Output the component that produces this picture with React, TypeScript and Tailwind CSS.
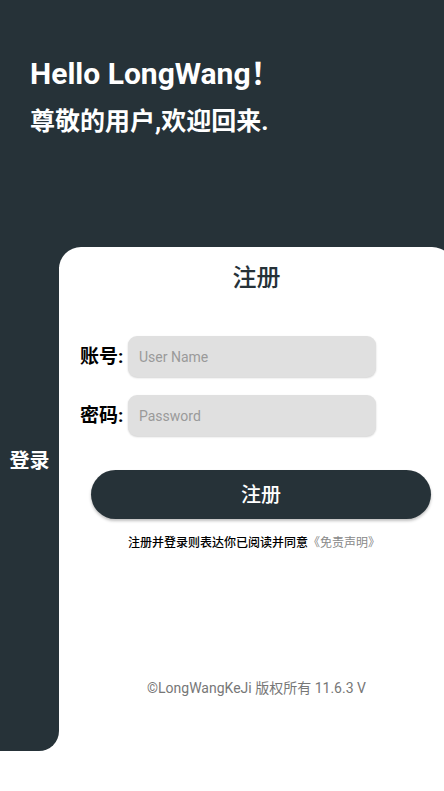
const sans = "font-['Roboto','Noto_Sans_CJK_SC',sans-serif]";

function Field({ label, placeholder, type }: { label: string; placeholder: string; type: string }) {
  return (
    <div className="flex items-center">
      <span className="w-[48px] text-[19px] font-bold text-black leading-none">{label}</span>
      <input
        type={type}
        placeholder={placeholder}
        className="h-[41px] w-[248px] rounded-[9px] bg-[#e0e0e0] px-[11px] text-[14px] text-gray-800 placeholder:text-[#9a9a9a] shadow-[0_1px_2px_rgba(0,0,0,0.18)] outline-none"
      />
    </div>
  );
}

export default function App() {
  return (
    <div className={`${sans} relative h-[791px] w-[444px] overflow-hidden bg-white`}>
      <div className="h-[267px] bg-[#263238] px-[30px] pt-[55px] text-white">
        <h1 className="text-[30px] font-bold leading-[38px]">Hello LongWang！</h1>
        <p className="mt-[12px] text-[25px] font-bold leading-[33px]">尊敬的用户,欢迎回来.</p>
      </div>

      <div className="-mt-[20px] flex">
        <div className="flex h-[504px] w-[59px] shrink-0 justify-center rounded-br-[20px] bg-[#263238] pt-[200px]">
          <span className="text-[20px] font-bold leading-[28px] text-white">登录</span>
        </div>

        <div className="relative w-[395px] shrink-0 rounded-t-[22px] bg-white pl-[21px]">
          <h2 className="-ml-[21px] pt-[14px] text-center text-[24px] font-medium leading-[34px] text-[#263238]">注册</h2>

          <div className="mt-[41px] flex flex-col gap-[18px]">
            <Field label="账号:" placeholder="User Name" type="text" />
            <Field label="密码:" placeholder="Password" type="password" />
          </div>

          <button className="mt-[34px] ml-[11px] flex h-[49px] w-[340px] items-center justify-center rounded-full bg-[#263238] text-[20px] font-medium text-white shadow-[0_2px_3px_rgba(0,0,0,0.25)]">
            注册
          </button>

          <p className="mt-[15px] -ml-[21px] pr-[5px] text-center text-[12px] font-medium leading-[18px] text-black">
            注册并登录则表达你已阅读并同意<span className="font-normal text-[#888888]">《免责声明》</span>
          </p>

          <p className="mt-[126px] -ml-[21px] text-center text-[14px] text-[#777777]">
            ©LongWangKeJi 版权所有 11.6.3 V
          </p>
        </div>
      </div>
    </div>
  );
}
